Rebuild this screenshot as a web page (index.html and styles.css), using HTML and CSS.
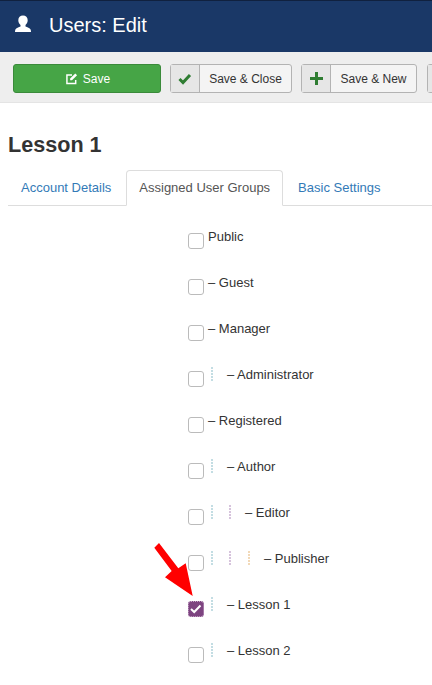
FILE: index.html
```html
<!DOCTYPE html>
<html lang="en">
<head>
<meta charset="UTF-8">
<title>Users: Edit</title>
<link rel="stylesheet" href="styles.css">
</head>
<body>

<!-- Title bar -->
<header class="header">
  <svg class="header-icon" width="18" height="18" viewBox="0 0 18 18"><path fill="#fff" d="M9 .5c2.800 0 4.700 2 4.700 4.800 0 2-1 3.800-2.200 4.700v1.500c1.600.7 4.500 1.500 5.100 3 .3.800.4 1.500.4 2.500H1c0-1 .1-1.700.4-2.500.6-1.500 3.500-2.300 5.100-3V10C5.300 9.100 4.300 7.300 4.300 5.300 4.300 2.500 6.200.5 9 .5z"/></svg>
  <h1>Users: Edit</h1>
</header>

<!-- Toolbar -->
<div class="toolbar">
  <button class="btn btn-save">
    <svg width="12" height="13" viewBox="0 0 13 13"><path fill="none" stroke="#fff" stroke-width="1.600" d="M10.500 8v3.800H1V2.600h5.500"/><path fill="#fff" d="M4.500 6.500L10 1l2 2-5.500 5.500h-2z"/></svg>
    Save
  </button>
  <button class="btn btn-split btn-close">
    <span class="btn-icon"><svg width="14" height="12" viewBox="0 0 14 12"><path fill="none" stroke="#2f7d32" stroke-width="3" d="M1.500 6l3.500 3.500 7-7.500"/></svg></span>
    <span class="btn-label">Save &amp; Close</span>
  </button>
  <button class="btn btn-split btn-new">
    <span class="btn-icon"><svg width="13" height="13" viewBox="0 0 13 13"><path fill="#2f7d32" d="M5 0h3v5h5v3H8v5H5V8H0V5h5z"/></svg></span>
    <span class="btn-label">Save &amp; New</span>
  </button>
  <button class="btn btn-split btn-more"><span class="btn-icon"></span></button>
</div>

<main class="content">
  <h2 class="page-title">Lesson 1</h2>

  <ul class="tabs">
    <li class="tab">Account Details</li>
    <li class="tab active">Assigned User Groups</li>
    <li class="tab">Basic Settings</li>
  </ul>

  <div class="groups">
    <div class="group"><span class="check"></span><span class="name">Public</span></div>
    <div class="group"><span class="check"></span><span class="name">– Guest</span></div>
    <div class="group"><span class="check"></span><span class="name">– Manager</span></div>
    <div class="group">
      <span class="check"></span><span class="level l1"></span>
      <span class="name">– Administrator</span>
    </div>
    <div class="group"><span class="check"></span><span class="name">– Registered</span></div>
    <div class="group">
      <span class="check"></span><span class="level l1"></span>
      <span class="name">– Author</span>
    </div>
    <div class="group">
      <span class="check"></span><span class="level l1"></span><span class="level l2"></span>
      <span class="name">– Editor</span>
    </div>
    <div class="group">
      <span class="check"></span><span class="level l1"></span><span class="level l2"></span><span class="level l3"></span>
      <span class="name">– Publisher</span>
    </div>
    <div class="group">
      <span class="check checked">
        <svg width="12" height="10" viewBox="0 0 12 10"><path fill="none" stroke="#fff" stroke-width="2" d="M1 5l3.200 3 6.300-6.500"/></svg>
      </span><span class="level l1"></span>
      <span class="name">– Lesson 1</span>
      <!-- red arrow pointing at the ticked box -->
      <svg class="arrow" width="44" height="58" viewBox="0 0 44 58"><path fill="#f00" d="M9 3L4.300 7.700 21.700 31 15 37.300 42.700 56 35.700 23.300 28.300 28.300z"/></svg>
    </div>
    <div class="group">
      <span class="check"></span><span class="level l1"></span>
      <span class="name">– Lesson 2</span>
    </div>
  </div>
</main>

</body>
</html>
```

FILE: styles.css
```css
*{box-sizing:border-box;}
html,body{margin:0;padding:0;}
body{width:432px;height:685px;overflow:hidden;background:#fff;font-family:"Liberation Sans",Arial,sans-serif;font-size:13px;color:#333;}

.header{height:52px;background:#1a3867;border-top:1px solid #10213f;display:flex;align-items:center;padding:0 0 3px 14px;}
.header-icon{flex:none;margin-bottom:3px;}
.header h1{margin:0 0 0 17px;font-size:20px;font-weight:normal;color:#fff;}

.toolbar{height:51px;background:#eee;border-bottom:1px solid #e4e4e4;padding:12px 0 0 13px;display:flex;align-items:flex-start;gap:9px;overflow:hidden;}
.btn{height:29px;padding:0;font:12px "Liberation Sans",Arial,sans-serif;color:#333;background:#f4f4f4;border:1px solid #b3b3b3;border-radius:3px;display:flex;align-items:center;flex:none;}
.btn-save{width:148px;justify-content:center;gap:5px;padding-left:2px;background:#46a546;border-color:#3a8a3a;color:#fff;}
.btn-split{justify-content:flex-start;}
.btn-close{width:122px;}
.btn-new{width:116px;}
.btn-more{width:40px;margin-left:1px;}
.btn-icon{width:29px;height:27px;background:#e6e6e6;border-right:1px solid #b3b3b3;display:flex;align-items:center;justify-content:center;flex:none;}
.btn-label{flex:1;text-align:center;}

.content{padding:0 0 0 8px;}
.page-title{margin:29px 0 0;font-size:21.6px;line-height:26px;font-weight:bold;color:#333;}

.tabs{list-style:none;margin:12px 0 0;padding:0;display:flex;gap:2px;border-bottom:1px solid #ddd;height:36px;}
.tab{height:36px;padding:0 12px;line-height:33px;color:#337ab7;border:1px solid transparent;border-radius:4px 4px 0 0;}
.tab.active{color:#555;background:#fff;border-color:#ddd #ddd #fff;}

.groups{padding:10px 0 0 180px;}
.group{position:relative;height:46px;display:flex;align-items:flex-start;padding-top:9px;white-space:nowrap;}
.name{line-height:24px;margin-left:4px;}
.level + .name{margin-left:14px;}
.check{width:16px;height:16px;margin-top:8px;border:1px solid #bbb;border-radius:3px;background:#fff;display:flex;align-items:center;justify-content:center;flex:none;}
.check.checked{background:#7d4480;border:1px dotted #c9a7ca;}
.level{width:2px;height:15px;margin:4px 0 0 7px;background:repeating-linear-gradient(#c3dde3 0 2px,#fff 2px 3px);flex:none;}
.level + .level{margin-left:16px;}
.l2{background:repeating-linear-gradient(#d6c3dc 0 2px,#fff 2px 3px);}
.level + .l3{margin-left:17px;background:repeating-linear-gradient(#f2d9b8 0 2px,#fff 2px 3px);}
.arrow{position:absolute;left:-38px;top:-44px;}
```
